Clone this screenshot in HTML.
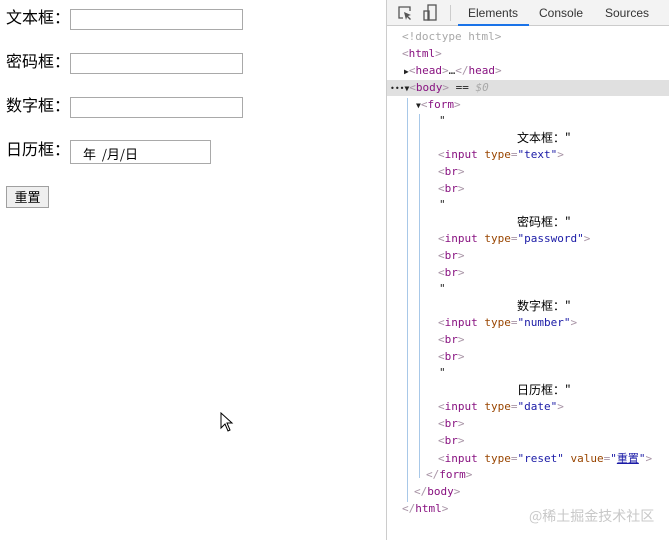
<!DOCTYPE html>
<html><head><meta charset="utf-8"><style>
*{margin:0;padding:0;box-sizing:border-box}
body{width:669px;height:540px;background:#fff;position:relative;overflow:hidden;font-family:"Liberation Sans","Noto Sans CJK SC",sans-serif}
.lbl{position:absolute;left:6px;font-size:16px;color:#000;line-height:20px}
.inp{position:absolute;left:70px;width:173px;height:21px;border:1px solid #a9a9a9;background:#fff}
.dt{position:absolute;left:70px;top:140px;width:141px;height:24px;border:1px solid #a9a9a9;font-size:13px;padding:3px 0 0 12px;color:#000;font-family:"Noto Sans CJK SC",sans-serif}
.btn{position:absolute;left:6px;top:186px;width:43px;height:22px;border:1px solid #a0a0a0;background:#efefef;font-size:13px;text-align:center;line-height:20px;font-family:"Noto Sans CJK SC",sans-serif}
#dev{position:absolute;left:386px;top:0;width:283px;height:540px;border-left:1px solid #ccc;background:#fff}
#tb{position:absolute;left:0;top:0;width:283px;height:26px;border-bottom:1px solid #ccc;background:#f3f3f3;font-size:12px;color:#333}
#tb span{position:absolute;top:6px}
.l{position:absolute;font-family:"DejaVu Sans Mono","Liberation Mono","Noto Sans CJK SC",monospace;font-size:11px;line-height:16px;white-space:pre;color:#881280}
.g{color:#a8a8a8}.t{color:#881280}.a{color:#994500}.v{color:#1a1aa6}.k{color:#222}.p{color:#a894a6}
.cj{font-family:"Noto Sans CJK SC",sans-serif;color:#000;font-size:12px}
</style></head><body>
<div class="lbl" style="top:9px">文本框：</div><div class="inp" style="top:9px"></div>
<div class="lbl" style="top:53px">密码框：</div><div class="inp" style="top:53px"></div>
<div class="lbl" style="top:97px">数字框：</div><div class="inp" style="top:97px"></div>
<div class="lbl" style="top:141px">日历框：</div><div class="dt">年 &nbsp;/月/日</div>
<div class="btn">重置</div>
<svg style="position:absolute;left:220px;top:412px" width="14" height="20" viewBox="0 0 14 20"><path d="M1 1 L1 16 L5 12 L8 19 L10 18 L7 11 L12 11 Z" fill="#fff" stroke="#000" stroke-width="1"/></svg>
<div id="dev">
<div id="tb">
<svg style="position:absolute;left:10px;top:5px" width="16" height="16" viewBox="0 0 16 16"><path d="M6 13H2V2h11v4" fill="none" stroke="#555" stroke-width="1.3"/><path d="M7 7l7 3-3 1 3 3-1 1-3-3-1 3z" fill="#555"/></svg>
<svg style="position:absolute;left:36px;top:4px" width="14" height="18" viewBox="0 0 14 18"><rect x="5" y="1" width="8" height="15" fill="none" stroke="#555" stroke-width="1.3"/><rect x="1" y="7" width="5" height="9" fill="none" stroke="#555" stroke-width="1.3"/></svg>
<div style="position:absolute;left:63px;top:5px;width:1px;height:16px;background:#ccc"></div>
<span style="left:81px;color:#333">Elements</span>
<div style="position:absolute;left:71px;top:24px;width:71px;height:2px;background:#1a73e8"></div>
<span style="left:152px">Console</span>
<span style="left:218px">Sources</span>
</div>
<div style="position:absolute;left:0;top:80px;width:283px;height:16px;background:#e0e0e0"></div>
<div style="position:absolute;left:20px;top:98px;width:1px;height:404px;background:#a8c8e8"></div>
<div style="position:absolute;left:32px;top:114px;width:1px;height:364px;background:#a8c8e8"></div>
<div class="l g" style="left:15px;top:29px">&lt;!doctype html&gt;</div>
<div class="l" style="left:15px;top:46px"><span class="p">&lt;</span>html<span class="p">&gt;</span></div>
<div class="l" style="left:17px;top:63px"><span class="k" style="font-size:8px">▶</span><span class="p">&lt;</span>head<span class="p">&gt;</span><span class="k">…</span><span class="p">&lt;/</span>head<span class="p">&gt;</span></div>
<div class="l" style="left:3px;top:80px"><span class="k" style="font-size:8px">•••▼</span><span class="p">&lt;</span>body<span class="p">&gt;</span><span class="k"> == </span><span class="g" style="font-style:italic">$0</span></div>
<div class="l" style="left:29px;top:97px"><span class="k" style="font-size:8px">▼</span><span class="p">&lt;</span>form<span class="p">&gt;</span></div>

<div class="l k" style="left:52px;top:113px">"</div>
<div class="l" style="left:130px;top:130px"><span class="cj">文本框：&quot;</span></div>
<div class="l" style="left:51px;top:147px"><span class="p">&lt;</span>input <span class="a">type</span><span class="p">=</span><span class="v">"text"</span><span class="p">&gt;</span></div>
<div class="l" style="left:51px;top:164px"><span class="p">&lt;</span>br<span class="p">&gt;</span></div>
<div class="l" style="left:51px;top:181px"><span class="p">&lt;</span>br<span class="p">&gt;</span></div>

<div class="l k" style="left:52px;top:197px">"</div>
<div class="l" style="left:130px;top:214px"><span class="cj">密码框：&quot;</span></div>
<div class="l" style="left:51px;top:231px"><span class="p">&lt;</span>input <span class="a">type</span><span class="p">=</span><span class="v">"password"</span><span class="p">&gt;</span></div>
<div class="l" style="left:51px;top:248px"><span class="p">&lt;</span>br<span class="p">&gt;</span></div>
<div class="l" style="left:51px;top:265px"><span class="p">&lt;</span>br<span class="p">&gt;</span></div>

<div class="l k" style="left:52px;top:281px">"</div>
<div class="l" style="left:130px;top:298px"><span class="cj">数字框：&quot;</span></div>
<div class="l" style="left:51px;top:315px"><span class="p">&lt;</span>input <span class="a">type</span><span class="p">=</span><span class="v">"number"</span><span class="p">&gt;</span></div>
<div class="l" style="left:51px;top:332px"><span class="p">&lt;</span>br<span class="p">&gt;</span></div>
<div class="l" style="left:51px;top:349px"><span class="p">&lt;</span>br<span class="p">&gt;</span></div>

<div class="l k" style="left:52px;top:365px">"</div>
<div class="l" style="left:130px;top:382px"><span class="cj">日历框：&quot;</span></div>
<div class="l" style="left:51px;top:399px"><span class="p">&lt;</span>input <span class="a">type</span><span class="p">=</span><span class="v">"date"</span><span class="p">&gt;</span></div>
<div class="l" style="left:51px;top:416px"><span class="p">&lt;</span>br<span class="p">&gt;</span></div>
<div class="l" style="left:51px;top:433px"><span class="p">&lt;</span>br<span class="p">&gt;</span></div>
<div class="l" style="left:51px;top:450px"><span class="p">&lt;</span>input <span class="a">type</span><span class="p">=</span><span class="v">"reset"</span> <span class="a">value</span><span class="p">=</span><span class="v">"<span style="font-family:'Noto Sans CJK SC';text-decoration:underline">重置</span>"</span><span class="p">&gt;</span></div>
<div class="l" style="left:39px;top:467px"><span class="p">&lt;/</span>form<span class="p">&gt;</span></div>
<div class="l" style="left:27px;top:484px"><span class="p">&lt;/</span>body<span class="p">&gt;</span></div>
<div class="l" style="left:15px;top:501px"><span class="p">&lt;/</span>html<span class="p">&gt;</span></div>
<div style="position:absolute;left:142px;top:506px;font-size:14px;color:#c8c8c8;font-family:'Noto Sans CJK SC',sans-serif">@稀土掘金技术社区</div>
</div>
</body></html>
